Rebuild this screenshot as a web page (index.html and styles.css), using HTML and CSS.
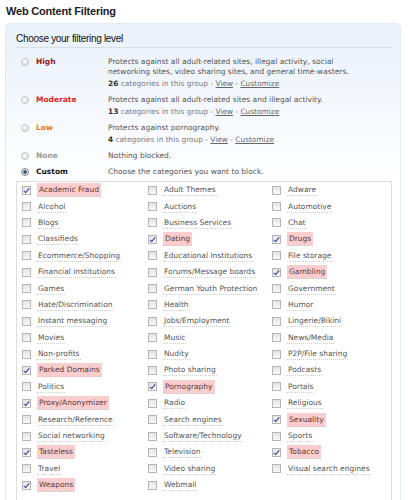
FILE: index.html
```html
<!DOCTYPE html>
<html>
<head>
<meta charset="utf-8">
<link rel="stylesheet" href="styles.css">
</head>
<body>
<h1 class="title">Web Content Filtering</h1>
<div class="panel">
  <h2 class="subtitle">Choose your filtering level</h2>
  <div class="levels">
    <div class="level">
      <span class="radio"></span>
      <span class="lname high">High</span>
      <div class="desc">
        <div>Protects against all adult-related sites, illegal activity, social networking sites, video sharing sites, and general time-wasters.</div>
        <div class="count"><b>26</b> categories in this group - <a>View</a> - <a>Customize</a></div>
      </div>
    </div>
    <div class="level">
      <span class="radio"></span>
      <span class="lname moderate">Moderate</span>
      <div class="desc">
        <div>Protects against all adult-related sites and illegal activity.</div>
        <div class="count"><b>13</b> categories in this group - <a>View</a> - <a>Customize</a></div>
      </div>
    </div>
    <div class="level">
      <span class="radio"></span>
      <span class="lname low">Low</span>
      <div class="desc">
        <div>Protects against pornography.</div>
        <div class="count"><b>4</b> categories in this group - <a>View</a> - <a>Customize</a></div>
      </div>
    </div>
    <div class="level">
      <span class="radio"></span>
      <span class="lname none">None</span>
      <div class="desc"><div>Nothing blocked.</div></div>
    </div>
    <div class="level">
      <span class="radio on"></span>
      <span class="lname custom">Custom</span>
      <div class="desc"><div>Choose the categories you want to block.</div></div>
    </div>
  </div>
  <div class="cats">
    <div class="cat on"><span class="cb"></span><span class="cl">Academic Fraud</span></div>
    <div class="cat"><span class="cb"></span><span class="cl">Adult Themes</span></div>
    <div class="cat"><span class="cb"></span><span class="cl">Adware</span></div>
    <div class="cat"><span class="cb"></span><span class="cl">Alcohol</span></div>
    <div class="cat"><span class="cb"></span><span class="cl">Auctions</span></div>
    <div class="cat"><span class="cb"></span><span class="cl">Automotive</span></div>
    <div class="cat"><span class="cb"></span><span class="cl">Blogs</span></div>
    <div class="cat"><span class="cb"></span><span class="cl">Business Services</span></div>
    <div class="cat"><span class="cb"></span><span class="cl">Chat</span></div>
    <div class="cat"><span class="cb"></span><span class="cl">Classifieds</span></div>
    <div class="cat on"><span class="cb"></span><span class="cl">Dating</span></div>
    <div class="cat on"><span class="cb"></span><span class="cl">Drugs</span></div>
    <div class="cat"><span class="cb"></span><span class="cl">Ecommerce/Shopping</span></div>
    <div class="cat"><span class="cb"></span><span class="cl">Educational Institutions</span></div>
    <div class="cat"><span class="cb"></span><span class="cl">File storage</span></div>
    <div class="cat"><span class="cb"></span><span class="cl">Financial institutions</span></div>
    <div class="cat"><span class="cb"></span><span class="cl">Forums/Message boards</span></div>
    <div class="cat on"><span class="cb"></span><span class="cl">Gambling</span></div>
    <div class="cat"><span class="cb"></span><span class="cl">Games</span></div>
    <div class="cat"><span class="cb"></span><span class="cl">German Youth Protection</span></div>
    <div class="cat"><span class="cb"></span><span class="cl">Government</span></div>
    <div class="cat"><span class="cb"></span><span class="cl">Hate/Discrimination</span></div>
    <div class="cat"><span class="cb"></span><span class="cl">Health</span></div>
    <div class="cat"><span class="cb"></span><span class="cl">Humor</span></div>
    <div class="cat"><span class="cb"></span><span class="cl">Instant messaging</span></div>
    <div class="cat"><span class="cb"></span><span class="cl">Jobs/Employment</span></div>
    <div class="cat"><span class="cb"></span><span class="cl">Lingerie/Bikini</span></div>
    <div class="cat"><span class="cb"></span><span class="cl">Movies</span></div>
    <div class="cat"><span class="cb"></span><span class="cl">Music</span></div>
    <div class="cat"><span class="cb"></span><span class="cl">News/Media</span></div>
    <div class="cat"><span class="cb"></span><span class="cl">Non-profits</span></div>
    <div class="cat"><span class="cb"></span><span class="cl">Nudity</span></div>
    <div class="cat"><span class="cb"></span><span class="cl">P2P/File sharing</span></div>
    <div class="cat on"><span class="cb"></span><span class="cl">Parked Domains</span></div>
    <div class="cat"><span class="cb"></span><span class="cl">Photo sharing</span></div>
    <div class="cat"><span class="cb"></span><span class="cl">Podcasts</span></div>
    <div class="cat"><span class="cb"></span><span class="cl">Politics</span></div>
    <div class="cat on"><span class="cb"></span><span class="cl">Pornography</span></div>
    <div class="cat"><span class="cb"></span><span class="cl">Portals</span></div>
    <div class="cat on"><span class="cb"></span><span class="cl">Proxy/Anonymizer</span></div>
    <div class="cat"><span class="cb"></span><span class="cl">Radio</span></div>
    <div class="cat"><span class="cb"></span><span class="cl">Religious</span></div>
    <div class="cat"><span class="cb"></span><span class="cl">Research/Reference</span></div>
    <div class="cat"><span class="cb"></span><span class="cl">Search engines</span></div>
    <div class="cat on"><span class="cb"></span><span class="cl">Sexuality</span></div>
    <div class="cat"><span class="cb"></span><span class="cl">Social networking</span></div>
    <div class="cat"><span class="cb"></span><span class="cl">Software/Technology</span></div>
    <div class="cat"><span class="cb"></span><span class="cl">Sports</span></div>
    <div class="cat on"><span class="cb"></span><span class="cl">Tasteless</span></div>
    <div class="cat"><span class="cb"></span><span class="cl">Television</span></div>
    <div class="cat on"><span class="cb"></span><span class="cl">Tobacco</span></div>
    <div class="cat"><span class="cb"></span><span class="cl">Travel</span></div>
    <div class="cat"><span class="cb"></span><span class="cl">Video sharing</span></div>
    <div class="cat"><span class="cb"></span><span class="cl">Visual search engines</span></div>
    <div class="cat on"><span class="cb"></span><span class="cl">Weapons</span></div>
    <div class="cat"><span class="cb"></span><span class="cl">Webmail</span></div>
  </div>
</div>
</body>
</html>
```
FILE: styles.css
```css
html, body {
  margin: 0;
  padding: 0;
  background: #fff;
}
body {
  width: 408px;
  height: 500px;
  overflow: hidden;
  font-family: "DejaVu Sans", Verdana, sans-serif;
  font-size: 7.5px;
  color: #555;
}
.title {
  margin: 0;
  padding: 4px 6px 0 6px;
  height: 19px;
  box-sizing: border-box;
  font-family: "Liberation Sans", Arial, sans-serif;
  font-size: 11px;
  font-weight: bold;
  color: #222;
  line-height: 14px;
  letter-spacing: -0.2px;
}
.panel {
  margin: 4px 7px 0 5px;
  border: 1px solid #e3ebf3;
  border-bottom: none;
  border-radius: 5px 5px 0 0;
  background: linear-gradient(#e9f1fa 0, #f6f9fd 90px, #fff 160px);
  padding: 0 8px 0 10px;
  height: 480px;
}
.subtitle {
  margin: 0;
  padding: 8px 0 0 0;
  height: 24px;
  box-sizing: border-box;
  border-bottom: 1px solid #d9dee4;
  font-family: "Liberation Sans", Arial, sans-serif;
  font-size: 10px;
  font-weight: normal;
  letter-spacing: -0.3px;
  color: #111;
  line-height: 14px;
}
.levels {
  padding-top: 9px;
}
.level {
  display: grid;
  grid-template-columns: 20px 72px 1fr;
  align-items: start;
  margin-bottom: 6px;
  line-height: 10px;
}
.radio {
  display: block;
  width: 8px;
  height: 8px;
  margin: 1px 0 0 5px;
  border-radius: 50%;
  box-sizing: border-box;
  border: 1px solid #c4c4c4;
  background: radial-gradient(circle at 40% 35%, #fff 0, #e6e6e6 60%, #d0d0d0 100%);
}
.radio.on {
  border-color: #8a8a8a;
  background: radial-gradient(circle at 50% 50%, #1e3f6e 0, #2c5a96 35%, #dcdcdc 45%, #eee 100%);
}
.lname {
  font-weight: bold;
}
.high { color: #a0141a; }
.moderate { color: #e0241c; }
.low { color: #f07818; }
.none { color: #9a9a9a; }
.custom { color: #111; }
.desc {
  color: #555;
  padding-right: 24px;
}
.count {
  margin-top: 2px;
  font-size: 7.4px;
  color: #7a7a7a;
}
.count b {
  color: #333;
}
.count a {
  color: #666;
  text-decoration: underline;
}
.cats {
  margin-top: -2px;
  border: 1px solid #dedede;
  border-bottom: none;
  background: #fff;
  display: grid;
  grid-template-columns: 126px 124px 1fr;
  grid-auto-rows: 16.4px;
  padding: 0 0 0 5px;
  height: 330px;
}
.cat {
  display: flex;
  align-items: center;
  gap: 6px;
  white-space: nowrap;
  font-size: 7.5px;
}
.cb {
  flex: none;
  width: 9px;
  height: 9px;
  box-sizing: border-box;
  border: 1px solid #b5b5b5;
  background: linear-gradient(#e4e4e4, #f8f8f8);
  position: relative;
}
.cat.on .cb::after {
  content: "";
  position: absolute;
  left: 2px;
  top: 0px;
  width: 2px;
  height: 5px;
  border: solid #2a3fa0;
  border-width: 0 1px 1px 0;
  transform: rotate(40deg);
}
.cl {
  border-bottom: 1px dotted #cfcfcf;
  color: #555;
  line-height: 10px;
  padding: 1px 1px 0 1px;
}
.cat.on .cl {
  background: #fbcdcd;
  color: #5a3a3a;
  padding: 2px 2px 1px 2px;
}
```
